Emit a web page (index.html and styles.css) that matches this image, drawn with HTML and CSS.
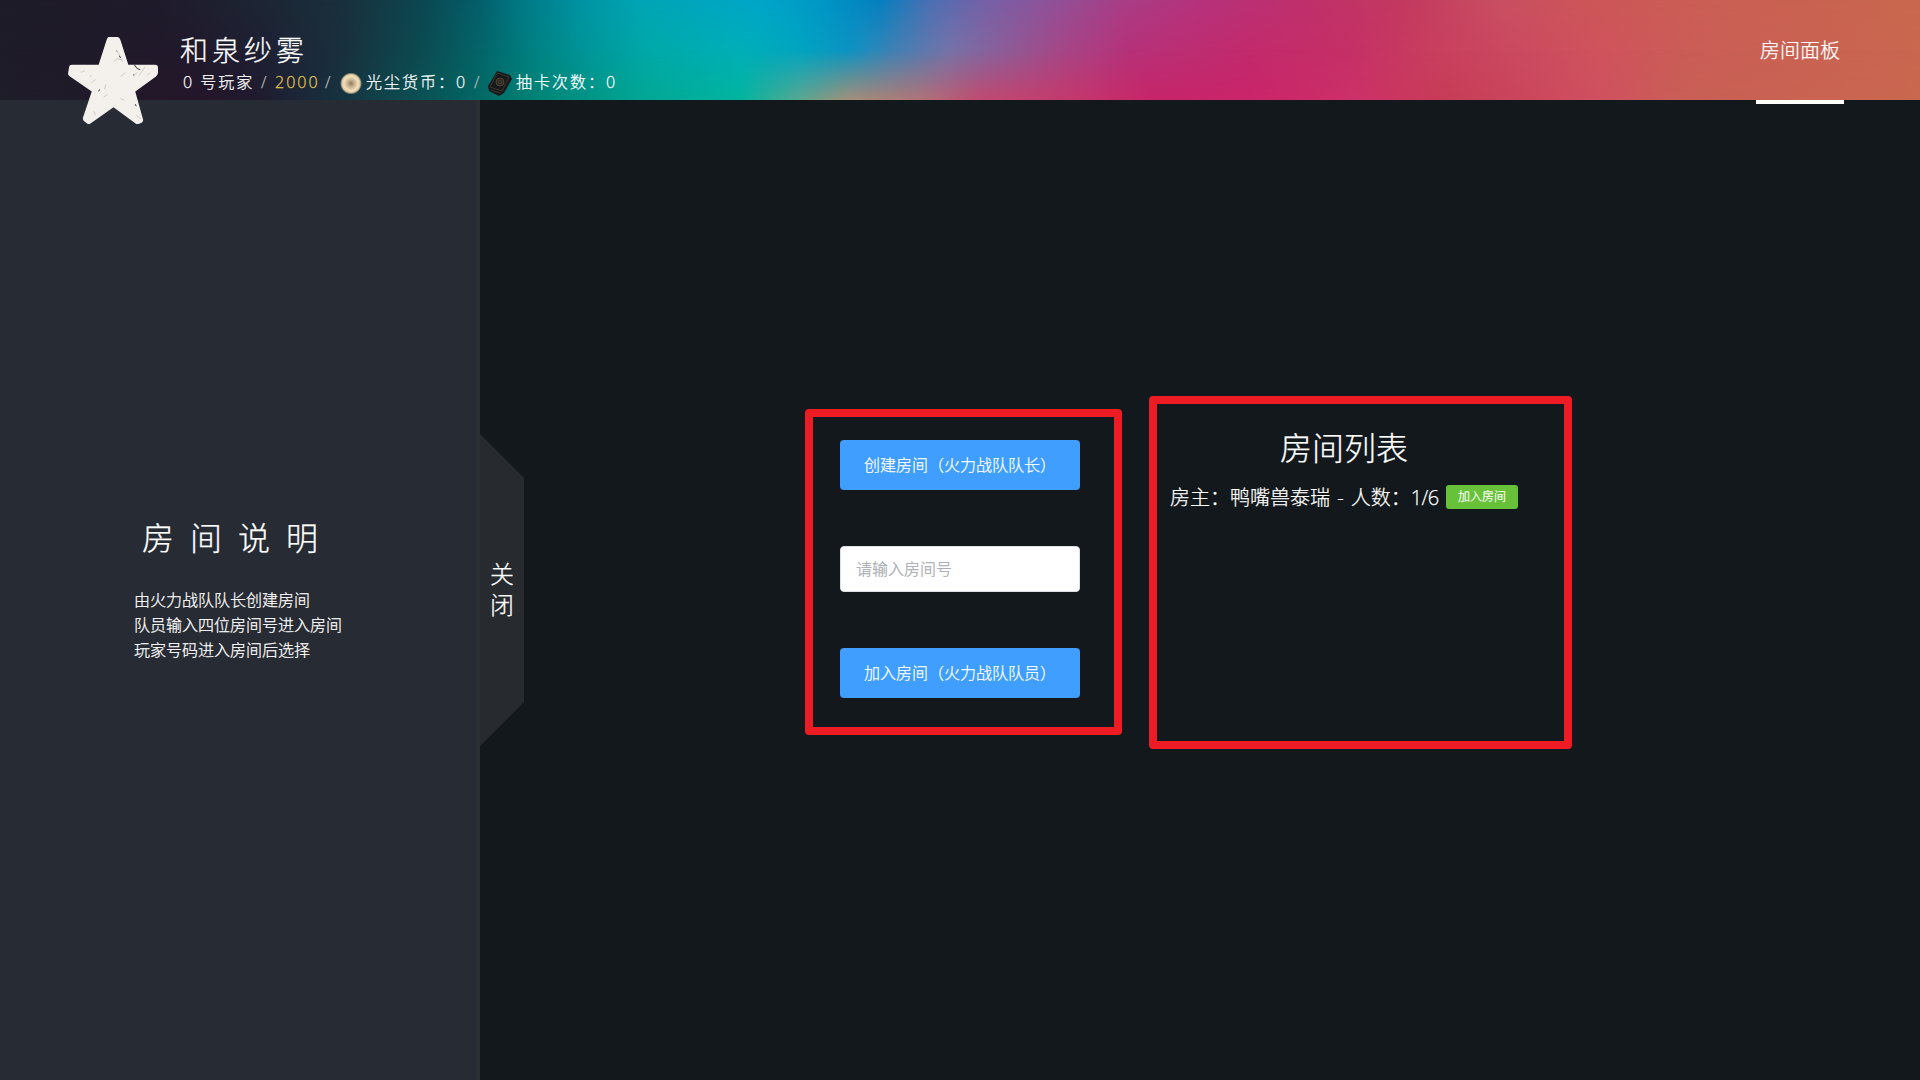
FILE: index.html
```html
<!DOCTYPE html>
<html lang="zh-CN">
<head>
<meta charset="utf-8">
<title>房间面板</title>
<link rel="stylesheet" href="styles.css">
</head>
<body>
<header class="topbar">
  <svg class="avatar" viewBox="0 0 92 90" aria-hidden="true">
    <path fill="#f4f1ec" d="M41 1h9q2 0 3 3l8 25h27q3 0 3 3v5q0 2-2 4L68 56l8 29q0 2-2 3l-3 1h-2L46 72 22 89h-2l-4-3q-1-1-1-3l9-27L2 41q-2-1-2-3l1-6q0-3 3-3h27l8-25q1-3 2-3z"/>
    <path class="scratch" d="M46 26l4-3 4 1M70 37l-4 3M78 31l-6 9M83 37l-3 3M13 37l4-2M28 44l-4 3M22 41l2-1M58 37l-5 4M43 77l5-2M26 76l2 4M38 49l-1 5M53 63l4 2M51 17l4 9M36 62l4-3M69 80l5 4"/>
    <path class="mark" d="M49 15l1 1M67 29l3 4 3 1M32 54l-1 2M68 69l1 2M66 39l1 1M52 20l1 2"/>
  </svg>
  <div class="profile">
    <h1 class="name">和泉纱雾</h1>
    <div class="stats">
      <span class="player">0 号玩家</span>
      <span class="slash">/</span>
      <span class="gold">2000</span>
      <span class="slash">/</span>
      <svg class="coin" viewBox="0 0 22 26" aria-hidden="true">
        <defs><radialGradient id="dust"><stop offset="0" stop-color="#8f7a5e"/><stop offset=".3" stop-color="#c5ad8a"/><stop offset=".65" stop-color="#f2dfbd"/><stop offset=".82" stop-color="#e0c79d"/><stop offset="1" stop-color="#e0c79d" stop-opacity="0"/></radialGradient></defs>
        <circle cx="11" cy="13.500" r="11" fill="url(#dust)"/>
      </svg>
      <span class="dust">光尘货币：0</span>
      <span class="slash">/</span>
      <svg class="card" viewBox="0 0 24 26" aria-hidden="true">
        <path fill="#17191b" d="M9 1l13 4 2 4-8 14-5 3L1 21l-1-5z"/>
        <path fill="none" stroke="#453d2d" stroke-width=".8" d="M9 3l12 4-7 14-12-4zM3 20l9 3"/>
        <circle cx="12" cy="12" r="4" fill="#2b2822" stroke="#5b5038" stroke-width=".8"/>
        <circle cx="12" cy="12" r="1.600" fill="none" stroke="#5b5038" stroke-width=".6"/>
      </svg>
      <span class="draws">抽卡次数：0</span>
    </div>
  </div>
  <nav class="tabs"><a class="tab">房间面板</a></nav>
</header>
<div class="layout">
  <aside class="sidebar">
    <h2 class="side-title">房间说明</h2>
    <p class="side-text">由火力战队队长创建房间<br>队员输入四位房间号进入房间<br>玩家号码进入房间后选择</p>
  </aside>
  <div class="toggle"><span>关</span><span>闭</span></div>
  <main class="content">
    <section class="panel actions">
      <button class="btn">创建房间（火力战队队长）</button>
      <input class="field" placeholder="请输入房间号">
      <button class="btn">加入房间（火力战队队员）</button>
    </section>
    <section class="panel rooms">
      <h2 class="rooms-title">房间列表</h2>
      <div class="room"><span class="room-info">房主：鸭嘴兽泰瑞 - 人数：<span class="count">1/6</span></span><button class="join">加入房间</button></div>
    </section>
  </main>
</div>
</body>
</html>
```
FILE: styles.css
```css
* { box-sizing: border-box; margin: 0; padding: 0; }
body { width: 1920px; height: 1080px; overflow: hidden; background: #12181b; color: #fff; font-family: "Open Sans", "Noto Sans CJK SC", sans-serif; font-weight: 300; -webkit-text-stroke: .25px; }
button, input { font: inherit; border: 0; }

/* Banner: three horizontal colour bands cross-faded from top to bottom */
.topbar { position: relative; z-index: 1; isolation: isolate; display: flex; height: 100px; padding: 0 76px 0 68px;
  background: linear-gradient(90deg, #1e1c28 0, #1f1b2b 160px, #1e2332 240px, #1a2f3c 340px, #0c4650 420px, #045f6b 480px, #007985 520px, #0093a3 580px, #00a5b5 640px, #00a6c8 760px, #0097c6 820px, #0480bf 880px, #4c6fb4 930px, #7362a9 980px, #8c549c 1040px, #a83e87 1120px, #b6327c 1200px, #bf306c 1300px, #c33860 1400px, #c94f62 1500px, #cd5658 1590px, #cb5e55 1700px, #c8684d 1920px); }
.topbar::before, .topbar::after { content: ""; position: absolute; inset: 0; z-index: -1; }
.topbar::before {
  background: linear-gradient(90deg, #1e1c28 0, #21192b 190px, #1e2033 260px, #1a2f3d 340px, #0c4a50 420px, #046468 480px, #007f80 530px, #00979a 590px, #00a9a8 650px, #00afb8 740px, #00a4c0 800px, #0c92c2 850px, #4080b4 895px, #7572a8 950px, #8f5a96 1010px, #a54787 1060px, #b63179 1130px, #c22a6c 1250px, #c53066 1350px, #c83e5e 1430px, #cb4a60 1520px, #cf535c 1600px, #ca5e56 1700px, #c9674f 1920px);
  -webkit-mask: linear-gradient(transparent, #000 50%); mask: linear-gradient(transparent, #000 50%); }
.topbar::after {
  background: linear-gradient(90deg, #1e1d28 0, #25162a 200px, #21192e 250px, #192c3c 320px, #0e4a4f 400px, #04605f 460px, #008577 540px, #02a693 640px, #00b59e 740px, #5aa790 800px, #a38f78 850px, #b07378 920px, #c04a70 980px, #c43a6c 1060px, #c62568 1150px, #c9246a 1250px, #cc3068 1350px, #c73d57 1450px, #c9435a 1500px, #cf5060 1600px, #c95f56 1680px, #c9674f 1920px);
  -webkit-mask: linear-gradient(transparent 50%, #000); mask: linear-gradient(transparent 50%, #000); }

.avatar { width: 91px; height: 89px; margin-top: 36px; }
.scratch { fill: none; stroke: #555059; stroke-width: .5; opacity: .5; }
.mark { fill: none; stroke: #35313a; stroke-width: 1; }
.profile { display: flex; flex-direction: column; padding-left: 21px; }
.name { height: 32px; margin-top: 34px; font-size: 28px; line-height: 32px; font-weight: 300; letter-spacing: 4px; }
.stats { display: flex; align-items: center; height: 26px; margin-top: 4px; padding-left: 3px; font-size: 16px; line-height: 24px; letter-spacing: 2px; white-space: nowrap; }
.stats span { height: 26px; }
.player { width: 78px; }
.slash { width: 14px; color: #bbb; }
.gold { width: 50px; color: #e6c84d; }
.coin { width: 22px; height: 26px; margin: 0 4px 0 1px; }
.dust { width: 108px; }
.card { width: 24px; height: 26px; margin-right: 4px; }
.tabs { display: flex; margin-left: auto; }
.tab { width: 88px; height: 104px; border-bottom: 4px solid #fff; font-size: 20px; line-height: 102px; text-align: center; }

.layout { display: flex; height: 980px; }
.sidebar { width: 480px; border-right: 4px solid #2a2f33; background: #272b33; padding: 414px 0 0 134px; }
.side-title { height: 48px; padding-left: 8px; font-size: 32px; line-height: 48px; font-weight: 300; letter-spacing: 16px; }
.side-text { margin-top: 26px; font-size: 16px; line-height: 25px; }
.toggle { display: flex; flex-direction: column; align-items: center; justify-content: center; width: 44px; height: 312px; margin-top: 334px; padding-bottom: 2px; background: #272b30; clip-path: polygon(0 0, 100% 44px, 100% 268px, 0 100%); font-size: 24px; line-height: 31px; }
.content { display: flex; align-items: flex-start; gap: 27px; padding: 296px 0 0 281px; }
.panel { border: 8px solid #ed1c24; border-radius: 4px; }
.actions { display: flex; flex-direction: column; width: 317px; height: 326px; margin-top: 13px; padding: 23px 27px; gap: 56px; }
.btn { width: 240px; height: 50px; border-radius: 4px; background: #409eff; color: #fff; font-size: 16px; line-height: 50px; }
.field { width: 240px; height: 46px; border: 1px solid #dcdfe6; border-radius: 4px; padding: 0 15px; background: #fff; font-size: 16px; }
.field::placeholder { color: #a8abb2; }
.rooms { width: 423px; height: 353px; padding: 20px 0 0 13px; }
.rooms-title { width: 348px; height: 48px; font-size: 32px; line-height: 48px; font-weight: 300; text-align: center; }
.room { display: flex; align-items: center; justify-content: space-between; width: 348px; height: 30px; margin-top: 10px; font-size: 20px; white-space: nowrap; }
.room-info { padding-bottom: 2px; word-spacing: 2px; }
.count { letter-spacing: -.7px; }
.join { width: 72px; height: 24px; border-radius: 3px; background: #67c23a; color: #fff; font-size: 12px; line-height: 22px; }
```
